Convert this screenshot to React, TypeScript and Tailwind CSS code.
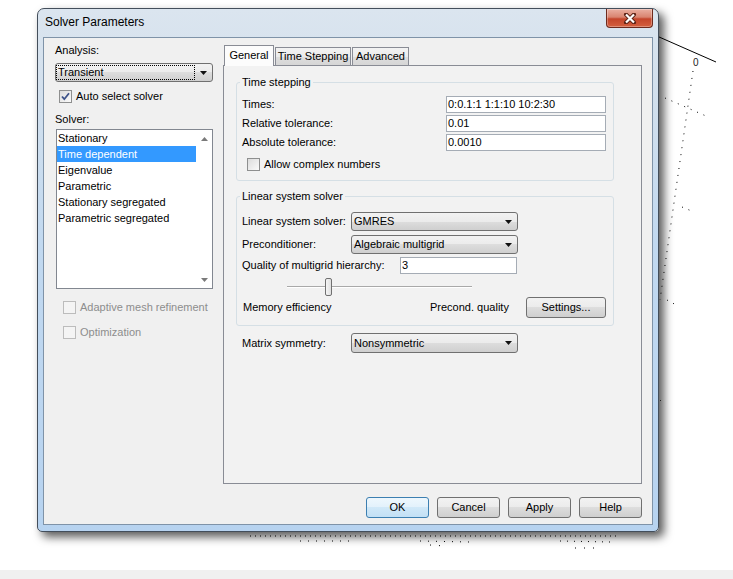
import React from "react";

const ff = "font-['Liberation_Sans',Arial,sans-serif]";
const btnBg =
  "bg-[linear-gradient(#f2f2f2,#ebebeb_50%,#dddddd_50%,#cfcfcf)]";

function DownArrow() {
  return (
    <svg width="7" height="4" viewBox="0 0 7 4">
      <path d="M0 0H7L3.5 4Z" fill="#111" />
    </svg>
  );
}

function Combo({
  text,
  className,
  focus,
}: {
  text: string;
  className: string;
  focus?: boolean;
}) {
  return (
    <div
      className={`flex items-center rounded-[3px] border border-[#707070] ${btnBg} ${className}`}
    >
      {focus ? (
        <div className="h-[15px] flex-1 border border-dotted border-black pl-[1px] leading-[13px]">
          {text}
        </div>
      ) : (
        <div className="flex-1 pl-[2px] leading-[13px]">{text}</div>
      )}
      <div className="flex w-[17px] justify-center">
        <DownArrow />
      </div>
    </div>
  );
}

function Btn({
  label,
  def,
  className,
}: {
  label: string;
  def?: boolean;
  className: string;
}) {
  return (
    <div
      className={`flex h-[21px] items-center justify-center rounded-[3px] border ${
        def
          ? "border-[#3c7fb1] bg-[linear-gradient(#eef7fd,#e2f1fb_50%,#d0e8f8_50%,#c3e0f5)]"
          : `border-[#707070] ${btnBg}`
      } ${className}`}
    >
      {label}
    </div>
  );
}

function Check({
  checked,
  disabled,
  label,
  className,
}: {
  checked?: boolean;
  disabled?: boolean;
  label: string;
  className: string;
}) {
  return (
    <div className={`flex h-[13px] items-center gap-[4px] ${className}`}>
      <div
        className={`flex h-[13px] w-[13px] items-center justify-center border ${
          disabled
            ? "border-[#bcbcbc] bg-[#f4f4f4]"
            : "border-[#8e8f8f] bg-[linear-gradient(135deg,#dcdcdc,#fafafa)]"
        }`}
      >
        {checked && (
          <svg width="11" height="11" viewBox="0 0 11 11">
            <path
              d="M2 5.5L4.3 8.2L9 2.2"
              fill="none"
              stroke="#3d5289"
              strokeWidth="1.8"
            />
          </svg>
        )}
      </div>
      <span
        className={`leading-[13px] ${disabled ? "text-[#8d8d8d]" : ""}`}
      >
        {label}
      </span>
    </div>
  );
}

function TextBox({ value, className }: { value: string; className: string }) {
  return (
    <div
      className={`h-[17px] border border-[#a5acb5] bg-white pl-[1px] leading-[15px] ${className}`}
    >
      {value}
    </div>
  );
}

function Group({
  label,
  className,
  children,
}: {
  label: string;
  className: string;
  children: React.ReactNode;
}) {
  return (
    <div
      className={`relative flex flex-col rounded-[3px] border border-[#d5dfe5] ${className}`}
    >
      <span className="absolute left-[3px] top-[-7px] bg-[#f2f2f2] px-[2px] leading-[13px]">
        {label}
      </span>
      {children}
    </div>
  );
}

function Decor() {
  return (
    <svg
      className="absolute left-0 top-0"
      width="733"
      height="570"
      viewBox="0 0 733 570"
    >
      <path d="M650 33L716 62" stroke="#000" strokeWidth="1" fill="none" />
      <text
        x="693"
        y="66"
        fontSize="10"
        fontFamily="Liberation Sans, Arial, sans-serif"
        fill="#222"
      >
        0
      </text>
      <g
        stroke="#000"
        strokeWidth="1"
        fill="none"
        strokeDasharray="1 6"
      >
        <path d="M693 71L660 300" />
        <path d="M665 98L706 116" />
        <path d="M682 207L694 212" />
        <path d="M667 300L678 306" />
        <path d="M660 400L662 402" />
        <path d="M250 536L620 536" strokeDasharray="1 4" />
        <path d="M300 541L350 541" strokeDasharray="1 7" />
        <path d="M420 541L470 542" strokeDasharray="1 7" />
        <path d="M560 541L610 542" strokeDasharray="1 6" />
        <path d="M575 548L600 548" strokeDasharray="1 8" />
        <path d="M430 545L445 546" strokeDasharray="1 8" />
      </g>
    </svg>
  );
}

function TitleBar() {
  return (
    <div className="flex h-[28px] items-start justify-between">
      <span className="ml-[7px] mt-[6px] text-[12px] leading-[15px] text-black">
        Solver Parameters
      </span>
      <div className="mr-[5px] flex h-[19px] w-[47px] items-center justify-center rounded-b-[4px] border border-t-0 border-[#6e2a1d] bg-[linear-gradient(#eab0a2,#d98470_45%,#c4452b_55%,#d4603f)] shadow-[inset_0_0_0_1px_rgba(255,255,255,0.3)]">
        <svg width="14" height="11" viewBox="0 0 14 11">
          <path
            d="M3 1.5L11 9.5M11 1.5L3 9.5"
            stroke="#5c2216"
            strokeWidth="4"
            strokeLinecap="round"
          />
          <path
            d="M3 1.5L11 9.5M11 1.5L3 9.5"
            stroke="#ffffff"
            strokeWidth="2.2"
          />
        </svg>
      </div>
    </div>
  );
}

const solvers = [
  "Stationary",
  "Time dependent",
  "Eigenvalue",
  "Parametric",
  "Stationary segregated",
  "Parametric segregated",
];

function LeftPanel() {
  return (
    <div className="flex w-[158px] flex-col">
      <div className="mt-[-2px] h-[13px] leading-[13px]">Analysis:</div>
      <Combo text="Transient" focus className="mt-[6px] h-[19px] w-[158px]" />
      <Check checked label="Auto select solver" className="ml-[4px] mt-[8px]" />
      <div className="mt-[10px] h-[13px] leading-[13px]">Solver:</div>
      <div className="ml-[1px] mt-[3px] flex h-[160px] w-[157px] border border-[#828790] bg-white">
        <div className="flex flex-1 flex-col">
          {solvers.map((s) => (
            <div
              key={s}
              className={`h-[16px] pl-[1px] leading-[16px] ${
                s === "Time dependent" ? "bg-[#3399ff] text-white" : ""
              }`}
            >
              {s}
            </div>
          ))}
        </div>
        <div className="flex w-[16px] flex-col justify-between">
          <div className="flex h-[17px] items-center justify-center">
            <svg width="7" height="4" viewBox="0 0 7 4">
              <path d="M0 4H7L3.5 0Z" fill="#7a7a7a" />
            </svg>
          </div>
          <div className="flex h-[17px] items-center justify-center">
            <svg width="7" height="4" viewBox="0 0 7 4">
              <path d="M0 0H7L3.5 4Z" fill="#7a7a7a" />
            </svg>
          </div>
        </div>
      </div>
      <Check
        disabled
        label="Adaptive mesh refinement"
        className="ml-[8px] mt-[12px]"
      />
      <Check disabled label="Optimization" className="ml-[8px] mt-[12px]" />
    </div>
  );
}

function RightPanel() {
  return (
    <div className="ml-[10px] mt-[-1px] flex w-[419px] flex-col">
      <div className="flex h-[20px] items-end pl-[1px]">
        <div className="relative z-10 mb-[-1px] flex h-[21px] w-[50px] items-start justify-center border border-b-0 border-[#898c95] bg-[#fcfcfc] pt-[3px] leading-[13px]">
          General
        </div>
        <div className="ml-[1px] flex h-[18px] w-[76px] items-center justify-center border border-b-0 border-[#898c95] bg-[linear-gradient(#f3f3f3,#ebebeb_50%,#dedede_50%,#d6d6d6)] leading-[13px]">
          Time Stepping
        </div>
        <div className="ml-[1px] flex h-[18px] w-[57px] items-center justify-center border border-b-0 border-[#898c95] bg-[linear-gradient(#f3f3f3,#ebebeb_50%,#dedede_50%,#d6d6d6)] leading-[13px]">
          Advanced
        </div>
      </div>
      <div className="flex h-[419px] flex-col border border-[#898c95] bg-[#f2f2f2] pl-[12px] pt-[16px]">
        <Group label="Time stepping" className="w-[378px] pb-[9px] pl-[5px] pr-[7px] pt-[13px]">
          <div className="flex flex-col gap-[2px]">
            {[
              ["Times:", "0:0.1:1 1:1:10 10:2:30"],
              ["Relative tolerance:", "0.01"],
              ["Absolute tolerance:", "0.0010"],
            ].map(([l, v]) => (
              <div key={l} className="flex h-[17px] items-center justify-between">
                <span className="leading-[13px]">{l}</span>
                <TextBox value={v} className="w-[160px]" />
              </div>
            ))}
          </div>
          <Check label="Allow complex numbers" className="ml-[5px] mt-[7px]" />
        </Group>

        <Group
          label="Linear system solver"
          className="mt-[15px] w-[378px] pb-[7px] pl-[5px] pr-[7px] pt-[15px]"
        >
          <div className="flex h-[19px] items-center">
            <span className="w-[109px] leading-[13px]">Linear system solver:</span>
            <Combo text="GMRES" className="h-[19px] w-[167px]" />
          </div>
          <div className="mt-[4px] flex h-[19px] items-center">
            <span className="w-[109px] leading-[13px]">Preconditioner:</span>
            <Combo text="Algebraic multigrid" className="h-[19px] w-[167px]" />
          </div>
          <div className="mt-[3px] flex h-[17px] items-center">
            <span className="w-[158px] leading-[13px]">
              Quality of multigrid hierarchy:
            </span>
            <TextBox value="3" className="w-[117px]" />
          </div>
          <div className="relative ml-[45px] mt-[4px] h-[18px] w-[185px]">
            <div className="absolute left-0 right-0 top-[8px] h-[2px] border-t border-b border-t-[#a9a9a9] border-b-[#ffffff]" />
            <div className="absolute left-[38px] top-0 h-[18px] w-[7px] rounded-[2px] border border-[#707070] bg-[linear-gradient(90deg,#f5f5f5,#e0e0e0)]" />
          </div>
          <div className="mt-[1px] flex h-[21px] items-center">
            <span className="w-[188px] pl-[1px] leading-[13px]">Memory efficiency</span>
            <span className="leading-[13px]">Precond. quality</span>
            <Btn label="Settings..." className="ml-auto w-[80px]" />
          </div>
        </Group>

        <div className="ml-[6px] mt-[7px] flex h-[20px] items-center">
          <span className="w-[109px] leading-[13px]">Matrix symmetry:</span>
          <Combo text="Nonsymmetric" className="h-[20px] w-[167px]" />
        </div>
      </div>
      <div className="mt-[13px] flex justify-end gap-[8px]">
        <Btn label="OK" def className="w-[63px]" />
        <Btn label="Cancel" className="w-[63px]" />
        <Btn label="Apply" className="w-[63px]" />
        <Btn label="Help" className="w-[63px]" />
      </div>
    </div>
  );
}

export default function App() {
  return (
    <div
      className={`flex h-[579px] w-[733px] flex-col overflow-hidden bg-white text-[11px] text-black ${ff}`}
    >
      <div className="relative flex-1">
        <Decor />
        <div className="absolute left-[37px] top-[8px] flex h-[524px] w-[622px] flex-col rounded-t-[7px] rounded-b-[5px] border border-[#434e5b] bg-[linear-gradient(#dbe5ef,#d3e0ed_15%,#c2d9f0_45%,#b7d3f0)] shadow-[5px_5px_10px_rgba(0,0,0,0.65)]">
          <TitleBar />
          <div className="mx-[5px] flex h-[488px] border border-[#7f93a8] bg-[#f0f0f0] pl-[11px] pr-[9px] pt-[8px]">
            <LeftPanel />
            <RightPanel />
          </div>
        </div>
      </div>
      <div className="h-[9px] bg-[#f0f0f0]" />
    </div>
  );
}
